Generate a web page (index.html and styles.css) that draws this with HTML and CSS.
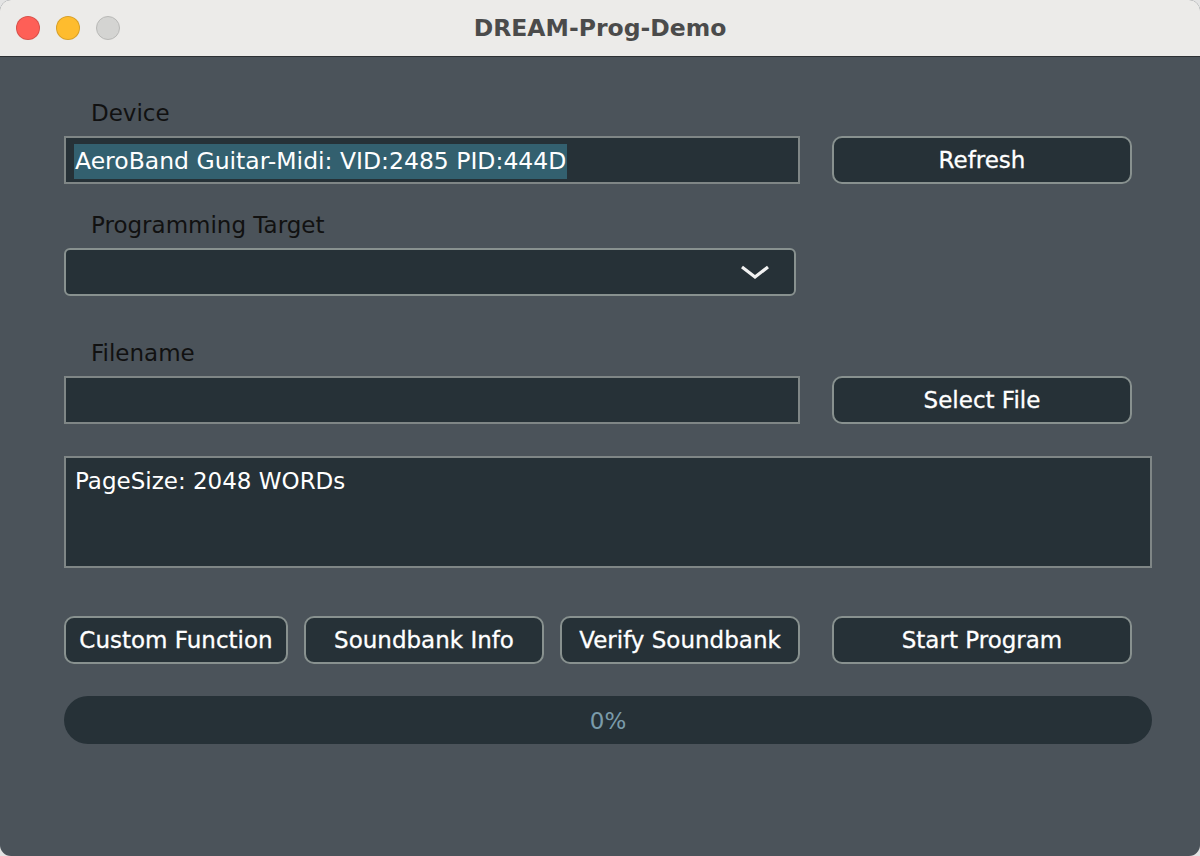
FILE: index.html
```html
<!DOCTYPE html>
<html lang="en">
<head>
    <meta charset="UTF-8">
    <meta name="viewport" content="width=device-width, initial-scale=1.0">
    <title>DREAM-Prog-Demo</title>
    <link rel="stylesheet" href="styles.css">
</head>
<body>
  <div class="window">
    <div class="titleBar">
        <div class="lights">
            <span class="light red"></span>
            <span class="light yellow"></span>
            <span class="light grey"></span>
        </div>
        <div class="title">DREAM-Prog-Demo</div>
    </div>

    <div class="content">
        <div class="label first">Device</div>
        <div class="row">
            <div class="field"><span class="selected">AeroBand Guitar-Midi: VID:2485 PID:444D</span></div>
            <button class="btn wide">Refresh</button>
        </div>

        <div class="label">Programming Target</div>
        <div class="row">
            <div class="combo">
                <svg class="chevron" width="30" height="16" viewBox="0 0 30 16">
                    <polyline points="2,3 15,13 28,3" fill="none" stroke="#f2f2f2" stroke-width="3.2"/>
                </svg>
            </div>
        </div>

        <div class="label spaced">Filename</div>
        <div class="row">
            <div class="field"></div>
            <button class="btn wide">Select File</button>
        </div>

        <div class="console">PageSize: 2048 WORDs</div>

        <div class="row actions">
            <button class="btn custom">Custom Function</button>
            <button class="btn info">Soundbank Info</button>
            <button class="btn verify">Verify Soundbank</button>
            <button class="btn wide">Start Program</button>
        </div>

        <div class="progress">0%</div>
    </div>
  </div>
</body>
</html>
```

FILE: styles.css
```css
body {
    margin: 0;
    background-color: #e4e4e4;
    font-family: "DejaVu Sans", "Liberation Sans", sans-serif;
}

.window {
    width: 1200px;
    height: 856px;
    border-radius: 11px;
    overflow: hidden;
    background-color: #4b535a;
}

.titleBar {
    height: 56px;
    background-color: #ecebe9;
    border-bottom: 1px solid #2c3034;
    display: flex;
    align-items: center;
    justify-content: center;
    position: relative;
}

.lights {
    position: absolute;
    left: 16px;
    top: 16px;
    display: flex;
    gap: 16px;
}

.light {
    width: 22px;
    height: 22px;
    border-radius: 50%;
    border: 1px solid rgba(0, 0, 0, 0.15);
}
.red { background-color: #fe5f57; }
.yellow { background-color: #febc2e; }
.grey { background-color: #d4d4d2; border-color: #b9b9b7; }

.title {
    font-size: 23.5px;
    font-weight: bold;
    color: #4b4b4b;
}

.content {
    padding: 0 48px 0 64px;
}

.label {
    font-size: 23px;
    line-height: 26px;
    color: #111;
    padding-left: 27px;
    margin-top: 28px;
    margin-bottom: 10px;
}
.label.first { margin-top: 43px; margin-bottom: 10px; }
.label.spaced { margin-top: 44px; margin-bottom: 10px; }

.row {
    display: flex;
    gap: 32px;
}

.field {
    box-sizing: border-box;
    width: 736px;
    height: 48px;
    border: 2px solid #7f8686;
    background-color: #263137;
    padding: 10px 8px;
    font-size: 23.5px;
    line-height: 26px;
    color: #fff;
    white-space: nowrap;
}

.selected {
    background-color: #33606f;
    padding: 3px 1px 4px;
}

.btn {
    box-sizing: border-box;
    height: 48px;
    border: 2px solid #88918f;
    border-radius: 10px;
    background-color: #263137;
    color: #fff;
    font-family: inherit;
    font-size: 23px;
    -webkit-text-stroke: 0.3px #fff;
    padding: 0;
}
.btn.wide { width: 300px; }

.combo {
    box-sizing: border-box;
    width: 732px;
    height: 48px;
    border: 2px solid #88918f;
    border-radius: 6px;
    background-color: #263137;
    display: flex;
    align-items: center;
    justify-content: flex-end;
    padding-right: 24px;
}

.console {
    box-sizing: border-box;
    height: 112px;
    margin-top: 32px;
    border: 2px solid #7f8686;
    background-color: #263137;
    color: #fff;
    font-size: 23px;
    line-height: 26px;
    padding: 10px 9px;
}

.actions {
    margin-top: 48px;
    gap: 16px;
}
.actions .btn.wide { margin-left: 16px; }
.btn.custom { width: 224px; }
.btn.info { width: 240px; }
.btn.verify { width: 240px; }

.progress {
    margin-top: 32px;
    height: 48px;
    border-radius: 24px;
    background-color: #263137;
    color: #7a9baa;
    font-size: 23px;
    line-height: 50px;
    text-align: center;
}
```
